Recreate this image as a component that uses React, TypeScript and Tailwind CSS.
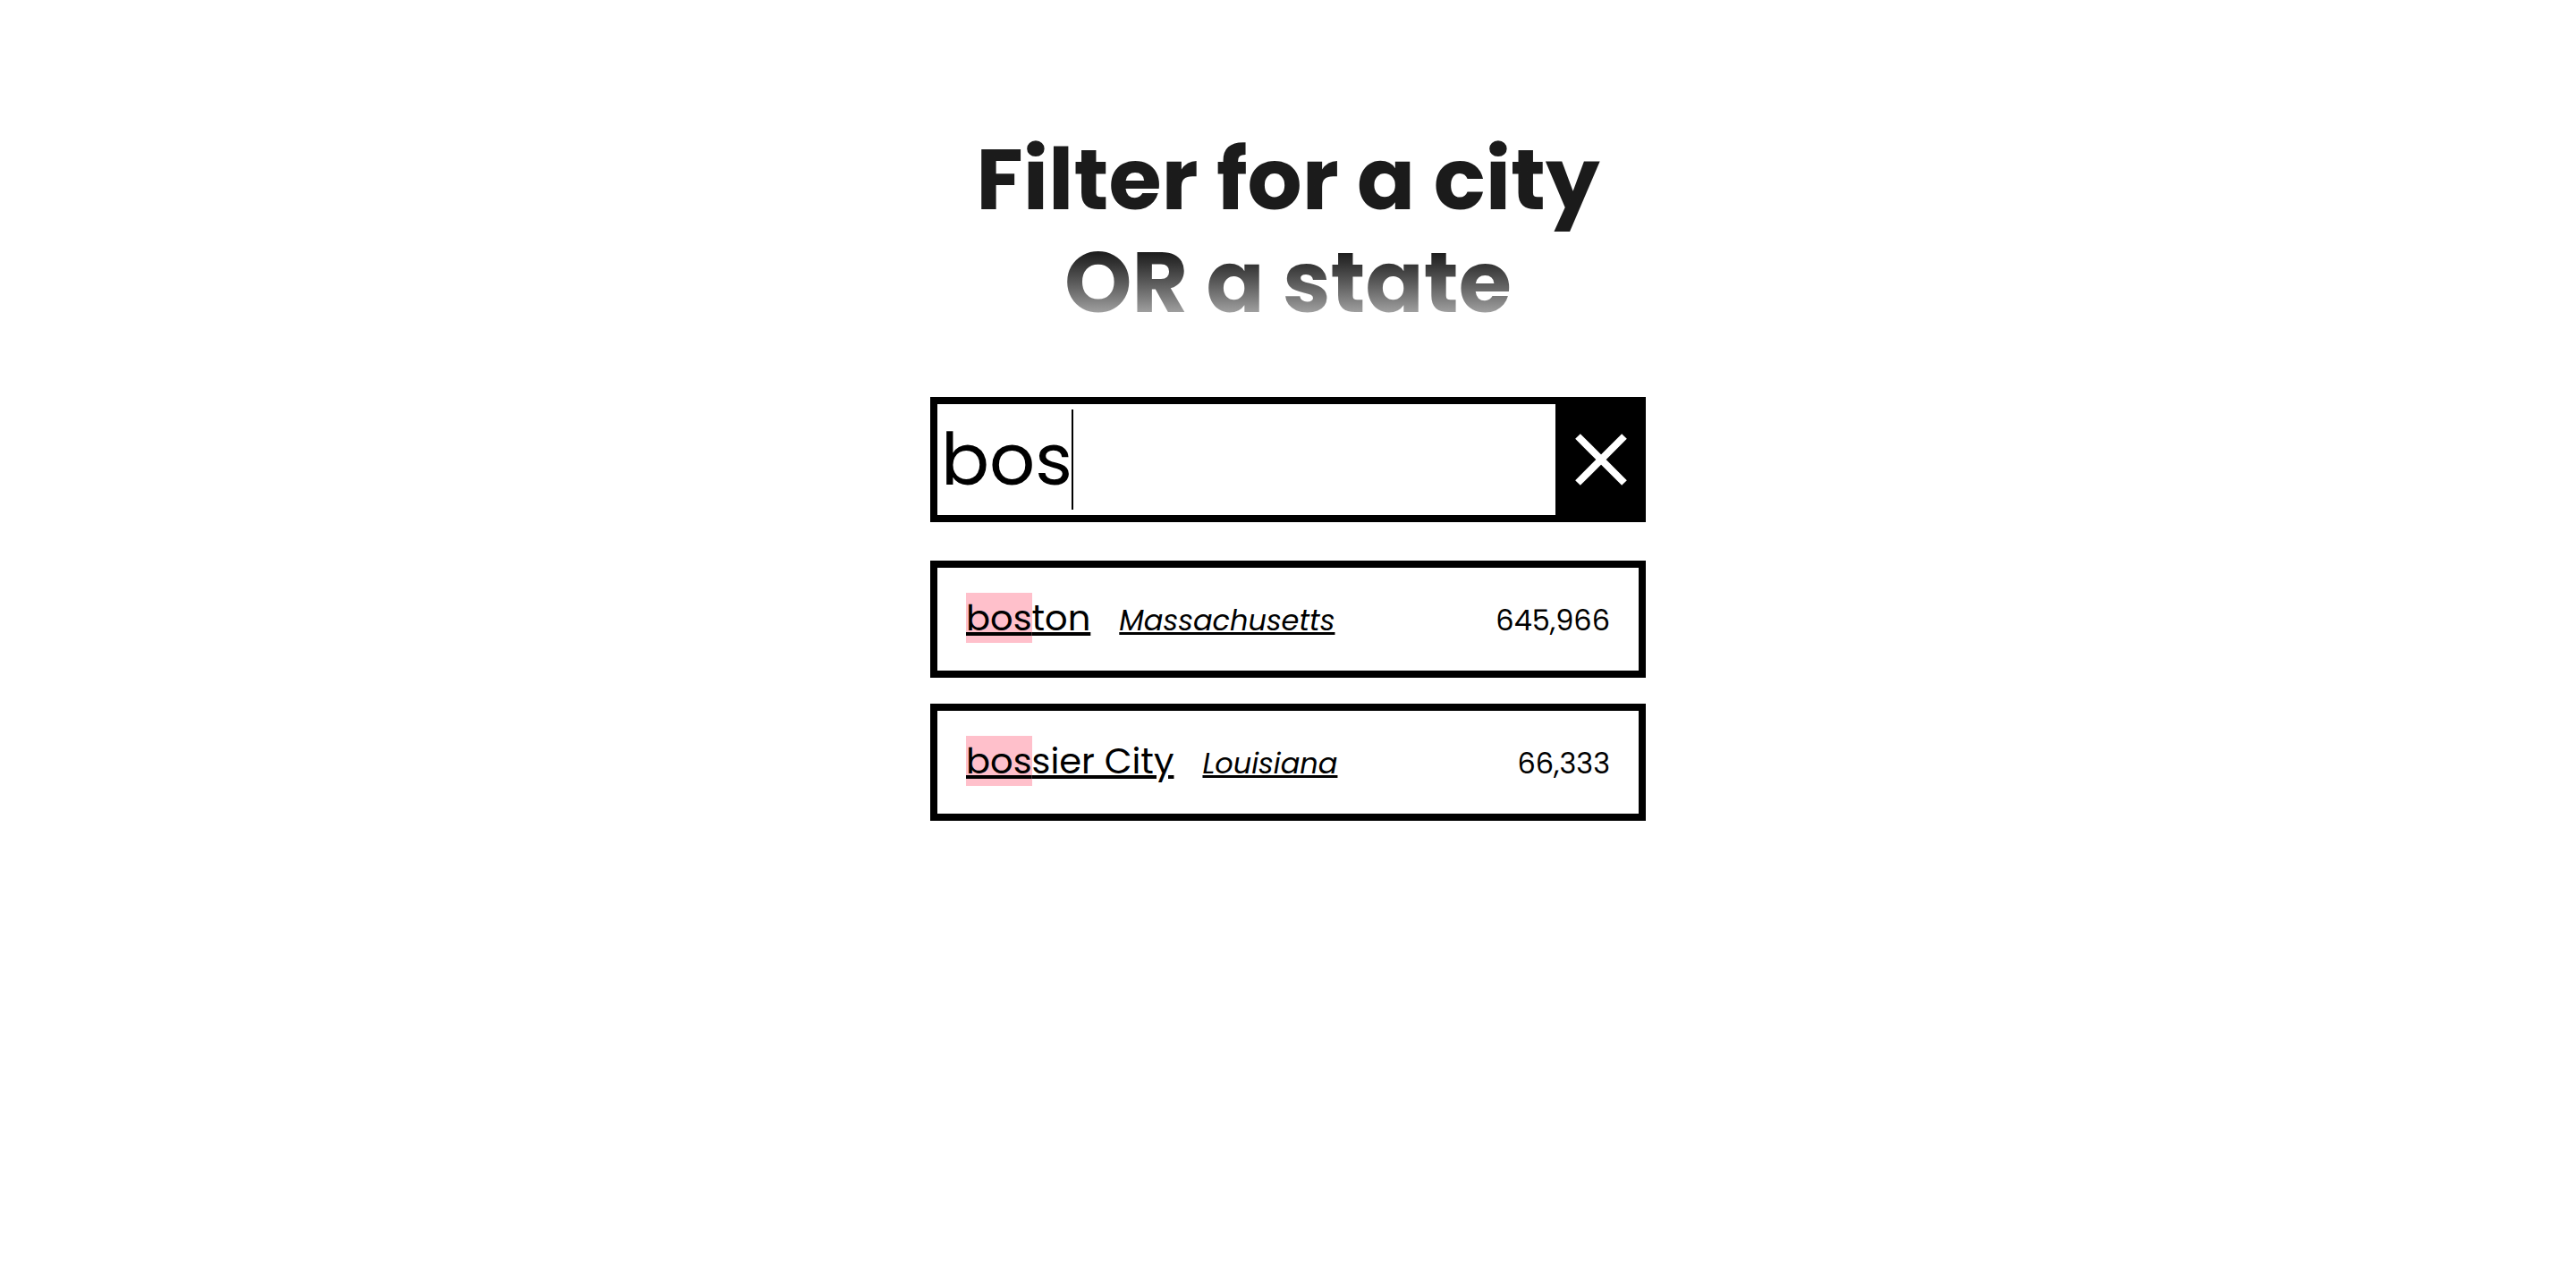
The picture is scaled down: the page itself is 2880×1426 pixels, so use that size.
import { useState } from "react";

type Place = { city: string; state: string; population: string };

const places: Place[] = [
  { city: "boston", state: "Massachusetts", population: "645,966" },
  { city: "bossier City", state: "Louisiana", population: "66,333" },
];

function Highlighted({ text, query }: { text: string; query: string }) {
  const at = query ? text.toLowerCase().indexOf(query.toLowerCase()) : -1;
  if (at < 0) return <>{text}</>;
  return (
    <>
      {text.slice(0, at)}
      <mark className="bg-[#ffc0cb] text-black">{text.slice(at, at + query.length)}</mark>
      {text.slice(at + query.length)}
    </>
  );
}

function PlaceRow({ place, query }: { place: Place; query: string }) {
  return (
    <li className="flex items-baseline gap-8 border-8 border-black px-8 py-[26px] leading-[60px]">
      <a href="#city" className="text-[40px] underline">
        <Highlighted text={place.city} query={query} />
      </a>
      <a href="#state" className="text-[32px] italic underline">
        <Highlighted text={place.state} query={query} />
      </a>
      <span className="ml-auto text-[32px]">{place.population}</span>
    </li>
  );
}

export default function App() {
  const [query, setQuery] = useState("bos");
  const shown = places.filter((p) =>
    (p.city + " " + p.state).toLowerCase().includes(query.toLowerCase())
  );

  return (
    <main className="mx-auto w-full max-w-[800px] pt-[143px] font-[Poppins,Inter,sans-serif] text-black">
      <h1 className="bg-linear-to-b from-[#1b1b1b] from-60% to-[#d4d4d4] bg-clip-text text-center text-[96px] leading-[115px] font-bold text-transparent">
        Filter for a city
        <br />
        OR a state
      </h1>

      <form className="relative mt-[71px] flex h-[140px] border-8 border-black" onSubmit={(e) => e.preventDefault()}>
        <input
          type="text"
          aria-label="City or state"
          value={query}
          onChange={(e) => setQuery(e.target.value)}
          className="min-w-0 flex-1 px-1 text-[80px] leading-[112px] caret-transparent outline-none"
        />
        {query === "bos" && <span className="absolute top-1.5 left-[150px] h-28 w-0.5 bg-black" />}
        <button
          type="button"
          aria-label="Clear"
          onClick={() => setQuery("")}
          className="flex w-[93px] items-center justify-center bg-black pl-2"
        >
          <svg viewBox="0 0 58 58" className="size-[58px]" stroke="white" strokeWidth="8">
            <path d="M3 3L55 55M55 3L3 55" />
          </svg>
        </button>
      </form>

      <ul className="mt-[43px] flex flex-col gap-[29px]">
        {shown.map((p) => (
          <PlaceRow key={p.city} place={p} query={query} />
        ))}
      </ul>
    </main>
  );
}
